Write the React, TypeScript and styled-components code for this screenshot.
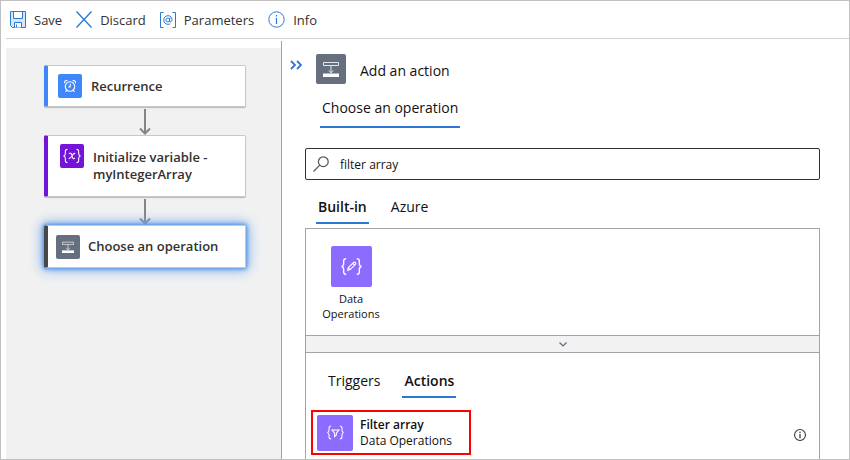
import React, { useState } from 'react';
import styled, { createGlobalStyle } from 'styled-components';

const GlobalStyle = createGlobalStyle`
  *, *::before, *::after { box-sizing: border-box; }
  body {
    margin: 0;
    background: #fff;
    color: #111;
    font-family: 'Open Sans', 'Noto Sans', sans-serif;
    font-size: 14px;
    line-height: 20px;
  }
  button, input { font: inherit; color: inherit; }
  svg { display: block; flex: none; }
`;

const Frame = styled.div`
  min-height: 100vh;
  display: flex;
  flex-direction: column;
  border: 1px solid #c0c0c0;
  padding-left: 5px;
`;

const Toolbar = styled.header`
  display: flex;
  align-items: center;
  gap: 14px;
  height: 38px;
  padding-left: 4px;
  border-bottom: 1px solid #d2d2d2;
`;

const ToolbarButton = styled.button`
  display: flex;
  align-items: center;
  gap: 8px;
  padding: 0;
  border: 0;
  background: none;
  color: #323130;
  font-size: 13px;
  cursor: pointer;
`;

const Workspace = styled.div`
  flex: 1;
  display: grid;
  grid-template-columns: 276px minmax(0, 1fr);
  padding-top: 2px;
`;

const DesignerColumn = styled.div`
  display: flex;
  padding-top: 7px;
  border-right: 1px solid #a3a3a3;
`;

const Canvas = styled.main`
  flex: 1;
  display: flex;
  flex-direction: column;
  padding: 17px 35px 0 38px;
  background: #f1f1f1;
`;

const StepCard = styled.button<{ $accent: string; $selected?: boolean; $tall?: boolean }>`
  display: flex;
  align-items: ${({ $tall }) => ($tall ? 'flex-start' : 'center')};
  gap: ${({ $selected }) => ($selected ? 8 : 9)}px;
  min-height: ${({ $tall, $selected }) => ($tall ? 62 : $selected ? 43 : 42)}px;
  padding: ${({ $tall, $selected }) => ($tall ? '8px 8px 8px 12px' : $selected ? '0 8px' : '0 8px 0 10px')};
  border: 1px solid #c8c8c8;
  border-left: 4px solid ${({ $accent }) => $accent};
  border-radius: 2px;
  background: #fff;
  box-shadow: ${({ $selected }) =>
    $selected ? '0 0 4px 1px #4a90e2, 0 0 13px 2px #7fb0ee' : '0 1px 1px #b8b8b8'};
  color: #323130;
  font-size: 13px;
  font-weight: 600;
  line-height: 17px;
  text-align: left;
  cursor: pointer;
`;

const StepTitle = styled.span<{ $low?: boolean }>`
  padding-top: ${({ $low }) => ($low ? 5 : 0)}px;
`;

const Tile = styled.span<{ $size: number; $color: string }>`
  display: flex;
  flex: none;
  align-items: center;
  justify-content: center;
  width: ${({ $size }) => $size}px;
  height: ${({ $size }) => $size}px;
  border-radius: 2px;
  background: ${({ $color }) => $color};
  color: #fff;
`;

const Connector = styled.div`
  display: flex;
  align-items: flex-end;
  justify-content: center;
  height: 28px;
`;

const Panel = styled.aside`
  display: flex;
  flex-direction: column;
  padding: 13px 29px 0 23px;
`;

const PanelHeader = styled.div`
  display: flex;
  align-items: center;
  gap: 14px;
  margin-left: -15px;
`;

const CollapseButton = styled.button`
  align-self: flex-start;
  padding: 6px 0;
  border: 0;
  background: none;
  cursor: pointer;
`;

const PanelTitle = styled.h1`
  margin: 4px 0 0;
  font-size: 14px;
  font-weight: 400;
`;

const TabRow = styled.div<{ $kind: 'panel' | 'scope' | 'results' }>`
  display: flex;
  gap: 20px;
  padding: ${({ $kind }) =>
    $kind === 'panel' ? '14px 0 20px 15px' : $kind === 'scope' ? '17px 0 4px 11px' : '18px 0 12px 20px'};
`;

const Tab = styled.button<{ $active?: boolean; $wide?: boolean }>`
  padding: ${({ $wide }) => ($wide ? '0 2px 8px' : '0 2px 5px')};
  border: 0;
  border-bottom: 2px solid ${({ $active }) => ($active ? '#2b78d2' : 'transparent')};
  background: none;
  font-weight: ${({ $active, $wide }) => ($active && !$wide ? 600 : 400)};
  white-space: nowrap;
  cursor: pointer;
`;

const SearchBox = styled.label`
  display: flex;
  align-items: center;
  gap: 11px;
  height: 32px;
  padding: 0 7px;
  border: 1px solid #323130;
  border-radius: 2px;
`;

const SearchInput = styled.input`
  flex: 1;
  min-width: 0;
  padding: 2px 0 0;
  border: 0;
  outline: 0;
  background: none;
  font-size: 12px;
`;

const Results = styled.section`
  flex: 1;
  border: 1px solid #a3a3a3;
  border-bottom: 0;
`;

const ConnectorGrid = styled.div`
  display: flex;
  height: 106px;
  padding: 17px 14px 0;
`;

const ConnectorButton = styled.button`
  display: flex;
  flex-direction: column;
  align-items: center;
  gap: 4px;
  width: 62px;
  height: 80px;
  padding: 0;
  border: 0;
  background: none;
  font-size: 11px;
  line-height: 15px;
  cursor: pointer;
`;

const ExpandBar = styled.button`
  display: flex;
  align-items: center;
  justify-content: center;
  width: 100%;
  height: 18px;
  padding: 0;
  border: solid #a3a3a3;
  border-width: 1px 0;
  background: #f2f2f2;
  cursor: pointer;
`;

const ActionRow = styled.div`
  display: flex;
  align-items: center;
  justify-content: space-between;
  padding: 0 13px 0 5px;
`;

const ActionItem = styled.button`
  display: flex;
  align-items: center;
  gap: 7px;
  width: 160px;
  height: 45px;
  padding: 0 4px;
  border: 2px solid #f00;
  background: none;
  font-size: 12px;
  line-height: 16px;
  text-align: left;
  cursor: pointer;
`;

const ActionName = styled.strong`
  display: block;
  font-weight: 600;
`;

const InfoButton = styled.button`
  margin-top: 4px;
  padding: 0;
  border: 0;
  background: none;
  cursor: pointer;
`;

const BLUE = '#2b78d2';

const SaveIcon = () => (
  <svg width="16" height="17" viewBox="0 0 16 17" fill="none" stroke={BLUE} aria-hidden="true">
    <path d="M.5.5h15v16H2.5l-2-2z" fill="#d6e7fa" />
    <path d="M3.5.5h9v7h-9z" fill="#fff" />
    <path d="M4.5 16.5v-5h7v5" fill="#fff" />
    <path d="M6.5 13.5v3" />
  </svg>
);

const DiscardIcon = () => (
  <svg width="16" height="17" viewBox="0 0 16 17" fill="none" stroke={BLUE} strokeWidth="1.3" aria-hidden="true">
    <path d="M.5.5l15 16M15.5.5l-15 16" />
  </svg>
);

const ParametersIcon = () => (
  <svg width="16" height="16" viewBox="0 0 16 16" fill="none" stroke={BLUE} aria-hidden="true">
    <path d="M3.5.5h-3v15h3M12.5.5h3v15h-3" />
    <circle cx="7.8" cy="8" r="1.9" />
    <path d="M9.9 5.7l-.4 3.4c0 1.3 2.5 1 2.5-1.5 0-2.2-1.6-3.9-3.9-3.9-2.500 0-4.300 1.900-4.300 4.400 0 2.500 1.700 4.200 4.200 4.200.9 0 1.700-.2 2.300-.5" />
  </svg>
);

const InfoIcon = ({ size = 17, color = BLUE }: { size?: number; color?: string }) => (
  <svg width={size} height={size} viewBox="0 0 17 17" fill="none" stroke={color} strokeWidth={size < 15 ? 1.5 : 1} aria-hidden="true">
    <circle cx="8.5" cy="8.5" r="7.7" />
    <path d="M8.5 7v6M8.5 4v1.5" strokeWidth={size < 15 ? 1.8 : 1.2} />
  </svg>
);

const AlarmIcon = () => (
  <svg width="14" height="14" viewBox="0 0 14 14" fill="none" stroke="currentColor" strokeWidth="1.1" strokeLinecap="round" aria-hidden="true">
    <circle cx="7" cy="7.5" r="4.7" />
    <path d="M7.2 5v3H5.6M1.5 3.8C1.4 2.3 2.6 1.3 4 1.6M12.5 3.8c.1-1.5-1.1-2.5-2.5-2.2M3.7 11.3l-.9 1.2M10.3 11.3l.9 1.2" />
  </svg>
);

const Braces = () => (
  <path d="M6 1.5c-2 0-2.5.7-2.5 2.3v2.5C3.5 8 3 8.7 1.5 9c1.5.3 2 1 2 2.7v2.5c0 1.6.5 2.3 2.5 2.3M16 1.5c2 0 2.5.7 2.5 2.3v2.5c0 1.7.5 2.4 2 2.7-1.5.3-2 1-2 2.7v2.5c0 1.600-.5 2.300-2.500 2.300" />
);

const VariableIcon = () => (
  <svg width="20" height="16" viewBox="0 0 22 18" fill="none" stroke="currentColor" strokeWidth="1.2" aria-hidden="true">
    <Braces />
    <path d="M7.5 6.3c2-1 2.7-.3 3.2 1.500l.8 2.700c.5 1.800 1.500 2 2.800.5M14.600 6.200c-1.200-.7-2 .1-3.300 2.300-1.400 2.300-2.400 3.800-4 3" />
  </svg>
);

const DataOperationsIcon = () => (
  <svg width="23" height="19" viewBox="0 0 22 18" fill="none" stroke="currentColor" strokeWidth="1.3" aria-hidden="true">
    <Braces />
    <path d="M7.3 12.7l.7-2.6 5.1-5.1c.9-.8 2.6.9 1.800 1.800l-5.100 5.100zM12.200 6l1.800 1.800M8 10.100l1.800 1.800" strokeWidth="1.1" />
  </svg>
);

const FilterIcon = () => (
  <svg width="19" height="17" viewBox="0 0 22 18" fill="none" stroke="currentColor" strokeWidth="1.2" aria-hidden="true">
    <Braces />
    <path d="M7 6h8l-3 3.7V12l-2 1.7v-4z" />
  </svg>
);

const OperationIcon = ({ size }: { size: number }) => (
  <svg width={size} height={size} viewBox="0 0 16 16" fill="none" stroke="currentColor" aria-hidden="true">
    <path d="M.5 1.5h15v3H.5z" stroke="#e4e7ea" />
    <path d="M8 4.5v7M5.7 9.5L8 11.8l2.3-2.3" stroke="#e4e7ea" />
    <path d="M0 12.5h16V16H0z" fill="currentColor" stroke="none" />
  </svg>
);

const ArrowIcon = () => (
  <svg width="12" height="26" viewBox="0 0 12 26" fill="none" stroke="#858585" strokeWidth="2" aria-hidden="true">
    <path d="M6 0v24M1 19.500L6 24.500l5-5" />
  </svg>
);

const CollapseIcon = () => (
  <svg width="12" height="10" viewBox="0 0 12 10" fill="none" stroke={BLUE} strokeWidth="1.8" aria-hidden="true">
    <path d="M1 1l4 4-4 4M7 1l4 4-4 4" />
  </svg>
);

const SearchIcon = () => (
  <svg width="16" height="16" viewBox="0 0 16 16" fill="none" stroke="#555" strokeWidth="1.2" aria-hidden="true">
    <circle cx="10.3" cy="5.7" r="4.9" />
    <path d="M6.8 9.2L.5 15.5" />
  </svg>
);

const ChevronIcon = () => (
  <svg width="8" height="5" viewBox="0 0 8 5" fill="none" stroke="#5b6b80" strokeWidth="1.2" aria-hidden="true">
    <path d="M.5.5L4 4 7.5.5" />
  </svg>
);

export default function App() {
  const [query, setQuery] = useState('filter array');

  return (
    <>
      <GlobalStyle />
      <Frame>
        <Toolbar>
          <ToolbarButton><SaveIcon />Save</ToolbarButton>
          <ToolbarButton><DiscardIcon />Discard</ToolbarButton>
          <ToolbarButton><ParametersIcon />Parameters</ToolbarButton>
          <ToolbarButton><InfoIcon />Info</ToolbarButton>
        </Toolbar>
        <Workspace>
          <DesignerColumn>
            <Canvas>
              <StepCard $accent="#3f87fb">
                <Tile $size={24} $color="#3f87fb"><AlarmIcon /></Tile>
                <StepTitle>Recurrence</StepTitle>
              </StepCard>
              <Connector><ArrowIcon /></Connector>
              <StepCard $accent="#7414d8" $tall>
                <Tile $size={24} $color="#7414d8"><VariableIcon /></Tile>
                <StepTitle $low>Initialize variable - myIntegerArray</StepTitle>
              </StepCard>
              <Connector><ArrowIcon /></Connector>
              <StepCard $accent="#484848" $selected>
                <Tile $size={24} $color="#656f7d"><OperationIcon size={12} /></Tile>
                <StepTitle>Choose an operation</StepTitle>
              </StepCard>
            </Canvas>
          </DesignerColumn>
          <Panel>
            <PanelHeader>
              <CollapseButton aria-label="Collapse panel"><CollapseIcon /></CollapseButton>
              <Tile $size={30} $color="#656f7d"><OperationIcon size={16} /></Tile>
              <PanelTitle>Add an action</PanelTitle>
            </PanelHeader>
            <TabRow $kind="panel" role="tablist">
              <Tab $active $wide role="tab" aria-selected>Choose an operation</Tab>
            </TabRow>
            <SearchBox>
              <SearchIcon />
              <SearchInput
                aria-label="Search connectors and actions"
                value={query}
                onChange={(event) => setQuery(event.target.value)}
              />
            </SearchBox>
            <TabRow $kind="scope" role="tablist">
              <Tab $active role="tab" aria-selected>Built-in</Tab>
              <Tab role="tab" aria-selected={false}>Azure</Tab>
            </TabRow>
            <Results>
              <ConnectorGrid>
                <ConnectorButton>
                  <Tile $size={41} $color="#8c6cff"><DataOperationsIcon /></Tile>
                  Data Operations
                </ConnectorButton>
              </ConnectorGrid>
              <ExpandBar aria-label="Show more connectors"><ChevronIcon /></ExpandBar>
              <TabRow $kind="results" role="tablist">
                <Tab role="tab" aria-selected={false}>Triggers</Tab>
                <Tab $active role="tab" aria-selected>Actions</Tab>
              </TabRow>
              <ActionRow>
                <ActionItem>
                  <Tile $size={36} $color="#8c6cff"><FilterIcon /></Tile>
                  <span>
                    <ActionName>Filter array</ActionName>
                    Data Operations
                  </span>
                </ActionItem>
                <InfoButton aria-label="About Filter array"><InfoIcon size={12} color="#30343c" /></InfoButton>
              </ActionRow>
            </Results>
          </Panel>
        </Workspace>
      </Frame>
    </>
  );
}
